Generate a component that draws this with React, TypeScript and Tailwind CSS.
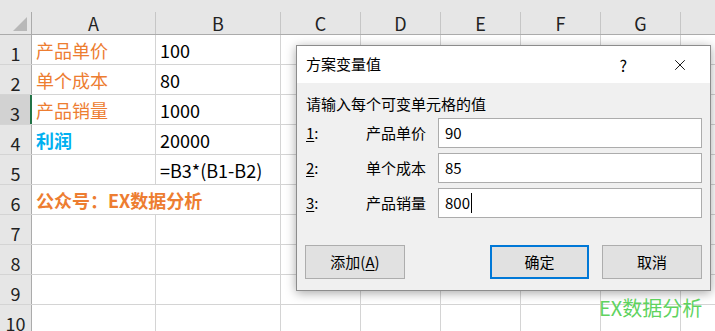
import { X } from "lucide-react";

const font = "font-['Microsoft_YaHei','Noto_Sans_CJK_SC',sans-serif]";

const cols = [
  { key: "A", w: "w-[124px]" },
  { key: "B", w: "w-[125px]" },
  { key: "C", w: "w-[80px]" },
  { key: "D", w: "w-[80px]" },
  { key: "E", w: "w-[80px]" },
  { key: "F", w: "w-[80px]" },
  { key: "G", w: "w-[80px]" },
];

type Cell = { text: string; cls?: string; span?: boolean };

const rows: { a?: Cell; b?: Cell }[] = [
  { a: { text: "产品单价", cls: "text-[#ed7d31]" }, b: { text: "100" } },
  { a: { text: "单个成本", cls: "text-[#ed7d31]" }, b: { text: "80" } },
  { a: { text: "产品销量", cls: "text-[#ed7d31]" }, b: { text: "1000" } },
  { a: { text: "利润", cls: "text-[#00b0f0] font-bold" }, b: { text: "20000" } },
  { b: { text: "=B3*(B1-B2)" } },
  { a: { text: "公众号：EX数据分析", cls: "text-[#ed7d31] font-bold", span: true } },
  {},
  {},
  {},
  {},
];

const fields = [
  { n: "1", label: "产品单价", value: "90" },
  { n: "2", label: "单个成本", value: "85" },
  { n: "3", label: "产品销量", value: "800" },
];

const Sheet = () => (
  <div className={`w-[715px] text-[18px] text-black ${font}`}>
    <div className="h-[12px] bg-[#e6e6e6]" />
    {/* column headers */}
    <div className="flex h-[23px] bg-[#e6e6e6] border-b border-[#ababab]">
      <div className="relative w-[32px] shrink-0 border-r border-[#ababab]">
        <div className="absolute right-[4px] bottom-[3px] w-0 h-0 border-l-[14px] border-l-transparent border-b-[14px] border-b-[#b8b8b8]" />
      </div>
      {cols.map((c) => (
        <div
          key={c.key}
          className={`${c.w} shrink-0 border-r border-[#c6c6c6] flex items-center justify-center leading-none text-[#222]`}
        >
          {c.key}
        </div>
      ))}
      <div className="flex-1" />
    </div>
    {rows.map((r, i) => (
      <div key={i} className="flex h-[30px] border-b border-[#d4d4d4]">
        <div
          className={`w-[32px] shrink-0 flex items-end justify-center pb-[2px] leading-none text-[#222] border-r ${
            i === 2 ? "bg-[#d2d2d2] border-r-2 border-[#217346]" : "bg-[#e6e6e6] border-[#ababab]"
          }`}
        >
          {i + 1}
        </div>
        {r.a?.span ? (
          <div className="w-[249px] shrink-0 border-r border-[#d4d4d4] flex items-end pb-[5px] pl-[4px] leading-none">
            <span className={r.a.cls}>{r.a.text}</span>
          </div>
        ) : (
          <>
            <div className="w-[124px] shrink-0 border-r border-[#d4d4d4] flex items-end pb-[5px] pl-[4px] leading-none">
              {r.a && <span className={r.a.cls}>{r.a.text}</span>}
            </div>
            <div className="w-[125px] shrink-0 border-r border-[#d4d4d4] flex items-end pb-[5px] pl-[4px] leading-none">
              {r.b && <span className={r.b.cls}>{r.b.text}</span>}
            </div>
          </>
        )}
        {cols.slice(2).map((c) => (
          <div key={c.key} className={`${c.w} shrink-0 border-r border-[#d4d4d4]`} />
        ))}
        <div className="flex-1" />
      </div>
    ))}
  </div>
);

const Dialog = () => (
  <div
    className={`absolute left-[296px] top-[45px] w-[415px] h-[246px] bg-[#f0f0f0] border border-[#8c8c8c] shadow-[0_2px_10px_rgba(0,0,0,0.35)] text-[15px] text-black flex flex-col ${font}`}
  >
    <div className="h-[37px] bg-white flex items-center pl-[9px] shrink-0">
      <span>方案变量值</span>
      <span className="ml-auto mr-[44px] text-[16px]">?</span>
      <X size={18} strokeWidth={1.2} className="mr-[21px]" />
    </div>
    <div className="pl-[9px] pr-[8px] pt-[11px] flex flex-col">
      <div className="h-[20px] leading-[20px]">请输入每个可变单元格的值</div>
      <div className="mt-[4px] flex flex-col gap-[5px]">
        {fields.map((f) => (
          <div key={f.n} className="flex items-center h-[30px]">
            <span className="w-[60px]">
              <span className="underline underline-offset-2">{f.n}</span>:
            </span>
            <span className="w-[72px]">{f.label}</span>
            <div className="flex-1 h-[30px] bg-white border border-[#acacac] flex items-center pl-[6px]">
              {f.value}
              {f.n === "3" && <span className="w-px h-[20px] bg-black ml-[1px]" />}
            </div>
          </div>
        ))}
      </div>
    </div>
    <div className="mt-auto mb-[11px] flex items-center px-[8px]">
      <button className="w-[100px] h-[34px] bg-[#e1e1e1] border border-[#adadad]">
        添加(<span className="underline underline-offset-2">A</span>)
      </button>
      <button className="ml-auto w-[99px] h-[34px] bg-[#e1e1e1] border-2 border-[#0078d7]">确定</button>
      <button className="ml-[13px] w-[100px] h-[34px] bg-[#e1e1e1] border border-[#adadad]">取消</button>
    </div>
  </div>
);

export default function App() {
  return (
    <div className="relative w-[715px] h-[331px] overflow-hidden bg-white">
      <Sheet />
      <Dialog />
      <div className={`absolute left-[599px] top-[298px] text-[20px] leading-none text-[#5fd35f] ${font}`}>
        EX数据分析
      </div>
    </div>
  );
}
